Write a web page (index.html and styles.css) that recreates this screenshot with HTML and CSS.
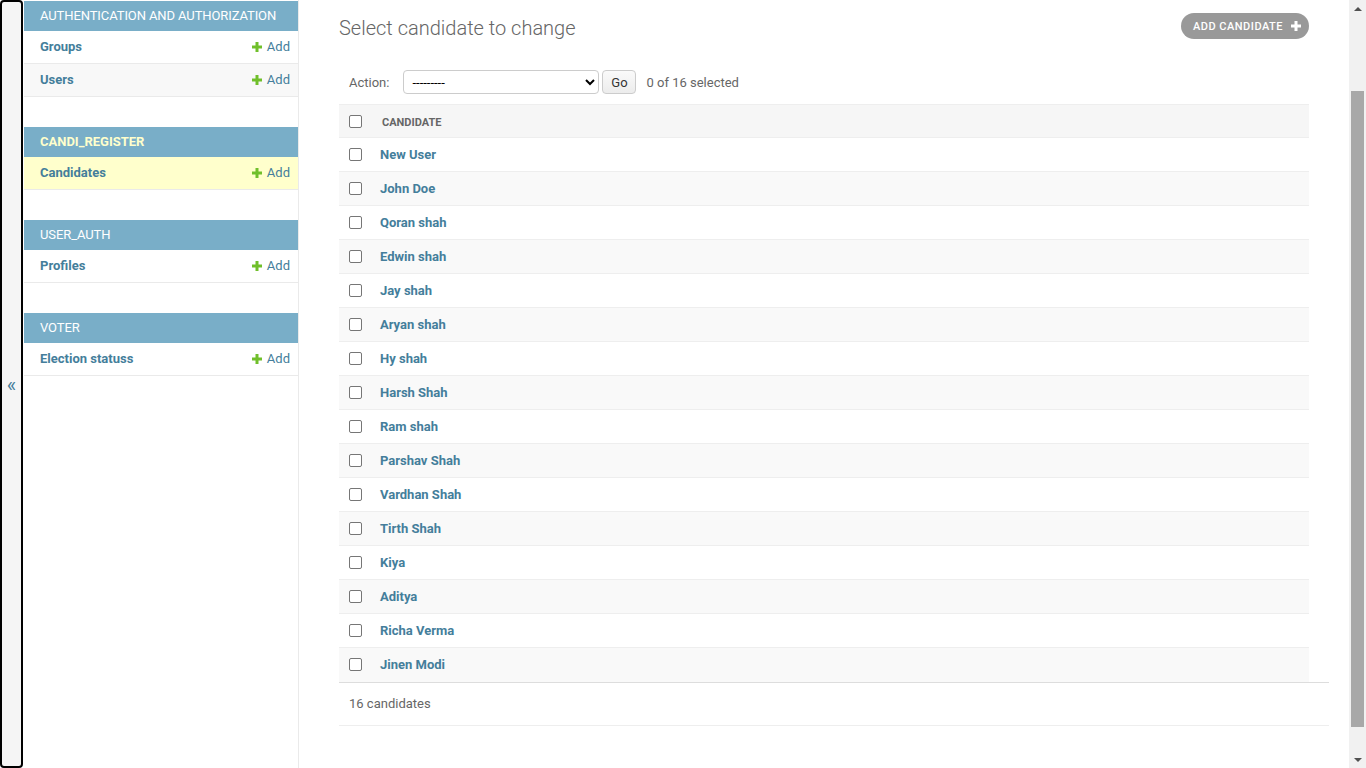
FILE: index.html
```html
<!DOCTYPE html>
<html lang="en">
<head>
<meta charset="utf-8">
<title>Select candidate to change</title>
<link rel="stylesheet" href="styles.css">
</head>
<body>
<div class="page">
  <button class="toggle" type="button">&laquo;</button>
  <nav class="sidebar">
    <div class="module">
      <div class="caption">Authentication and Authorization</div>
      <div class="row"><a class="model">Groups</a><a class="add"><svg viewBox="0 0 10 10"><path d="M3.5 0h3v3.5H10v3H6.5V10h-3V6.5H0v-3h3.5z"/></svg>Add</a></div>
      <div class="row alt"><a class="model">Users</a><a class="add"><svg viewBox="0 0 10 10"><path d="M3.5 0h3v3.5H10v3H6.5V10h-3V6.5H0v-3h3.5z"/></svg>Add</a></div>
    </div>
    <div class="module">
      <div class="caption current">Candi_Register</div>
      <div class="row current"><a class="model">Candidates</a><a class="add"><svg viewBox="0 0 10 10"><path d="M3.5 0h3v3.5H10v3H6.5V10h-3V6.5H0v-3h3.5z"/></svg>Add</a></div>
    </div>
    <div class="module">
      <div class="caption">User_Auth</div>
      <div class="row"><a class="model">Profiles</a><a class="add"><svg viewBox="0 0 10 10"><path d="M3.5 0h3v3.5H10v3H6.5V10h-3V6.5H0v-3h3.5z"/></svg>Add</a></div>
    </div>
    <div class="module">
      <div class="caption">Voter</div>
      <div class="row"><a class="model">Election statuss</a><a class="add"><svg viewBox="0 0 10 10"><path d="M3.5 0h3v3.5H10v3H6.5V10h-3V6.5H0v-3h3.5z"/></svg>Add</a></div>
    </div>
  </nav>
  <main class="main">
    <div class="head">
      <h1>Select candidate to change</h1>
      <a class="addbtn">Add candidate<svg viewBox="0 0 10 10"><path d="M3.5 0h3v3.5H10v3H6.5V10h-3V6.5H0v-3h3.5z"/></svg></a>
    </div>
    <div class="actions">
      <label class="action-label">Action:</label>
      <select class="action-select"><option>---------</option></select>
      <button class="go" type="button">Go</button>
      <span class="counter">0 of 16 selected</span>
    </div>
    <table class="results">
      <thead>
        <tr><th class="cb"><input type="checkbox"></th><th class="col"><span class="coltext">Candidate</span></th></tr>
      </thead>
      <tbody>
        <tr><td class="cb"><input type="checkbox"></td><th class="name"><a>New User</a></th></tr>
        <tr><td class="cb"><input type="checkbox"></td><th class="name"><a>John Doe</a></th></tr>
        <tr><td class="cb"><input type="checkbox"></td><th class="name"><a>Qoran shah</a></th></tr>
        <tr><td class="cb"><input type="checkbox"></td><th class="name"><a>Edwin shah</a></th></tr>
        <tr><td class="cb"><input type="checkbox"></td><th class="name"><a>Jay shah</a></th></tr>
        <tr><td class="cb"><input type="checkbox"></td><th class="name"><a>Aryan shah</a></th></tr>
        <tr><td class="cb"><input type="checkbox"></td><th class="name"><a>Hy shah</a></th></tr>
        <tr><td class="cb"><input type="checkbox"></td><th class="name"><a>Harsh Shah</a></th></tr>
        <tr><td class="cb"><input type="checkbox"></td><th class="name"><a>Ram shah</a></th></tr>
        <tr><td class="cb"><input type="checkbox"></td><th class="name"><a>Parshav Shah</a></th></tr>
        <tr><td class="cb"><input type="checkbox"></td><th class="name"><a>Vardhan Shah</a></th></tr>
        <tr><td class="cb"><input type="checkbox"></td><th class="name"><a>Tirth Shah</a></th></tr>
        <tr><td class="cb"><input type="checkbox"></td><th class="name"><a>Kiya</a></th></tr>
        <tr><td class="cb"><input type="checkbox"></td><th class="name"><a>Aditya</a></th></tr>
        <tr><td class="cb"><input type="checkbox"></td><th class="name"><a>Richa Verma</a></th></tr>
        <tr><td class="cb"><input type="checkbox"></td><th class="name"><a>Jinen Modi</a></th></tr>
      </tbody>
    </table>
    <p class="paginator">16 candidates</p>
  </main>
  <div class="scrollbar">
    <div class="sb-btn"><span class="tri up"></span></div>
    <div class="sb-track"><div class="sb-thumb"></div></div>
    <div class="sb-btn"><span class="tri down"></span></div>
  </div>
</div>
</body>
</html>
```

FILE: styles.css
```css
* { box-sizing: border-box; }
html, body { margin: 0; padding: 0; height: 100%; }
body {
  font-family: Roboto, "Liberation Sans", Arial, sans-serif;
  font-size: 13px;
  color: #333;
  background: #fff;
  overflow: hidden;
}
a { color: #447e9b; text-decoration: none; cursor: pointer; }

.page { display: flex; height: 768px; }

/* toggle */
.toggle {
  flex: 0 0 23px;
  width: 23px;
  height: 768px;
  margin: 0;
  padding: 0;
  border: 2px solid #000;
  border-radius: 4px;
  background: #f5f5f5;
  color: #447e9b;
  font-family: Roboto, "Liberation Sans", sans-serif;
  font-size: 20px;
  line-height: 1;
  display: flex;
  align-items: center;
  justify-content: center;
  padding-top: 2px;
}

/* sidebar */
.sidebar {
  flex: 0 0 275px;
  width: 275px;
  margin-left: 1px;
  padding-top: 1px;
  border-right: 1px solid #eaeaea;
  background: #fff;
}
.module { margin-bottom: 30px; }
.caption {
  height: 30px;
  line-height: 30px;
  padding-left: 16px;
  background: #79aec8;
  color: #fff;
  font-size: 13px;
  text-transform: uppercase;
  letter-spacing: -0.1px;
}
.caption.current { color: #ffc; font-weight: 700; letter-spacing: 0; }
.row {
  height: 33px;
  display: flex;
  align-items: center;
  justify-content: space-between;
  padding: 0 8px 1px 16px;
  border-bottom: 1px solid #eaeaea;
  background: #fff;
}
.row.alt { background: #f8f8f8; }
.row.current { background: #ffc; }
.model { font-weight: 700; font-size: 13px; }
.add { display: flex; align-items: center; font-size: 13px; }
.add svg { width: 10px; height: 10px; fill: #70bf2b; margin-right: 5px; }

/* main */
.main {
  flex: 1 1 auto;
  min-width: 0;
  padding: 13px 20px 0 40px;
}
.head {
  display: flex;
  justify-content: space-between;
  align-items: flex-start;
  margin-right: 20px;
}
.head h1 {
  margin: 3px 0 0 0;
  font-size: 20px;
  line-height: 24px;
  font-weight: 300;
  color: #666;
}
.addbtn {
  display: flex;
  align-items: center;
  height: 26px;
  padding: 0 8px 0 12px;
  border-radius: 15px;
  background: #999;
  color: #fff;
  font-size: 11px;
  font-weight: 500;
  text-transform: uppercase;
  letter-spacing: 0.5px;
}
.addbtn svg { width: 10px; height: 10px; fill: #fff; margin-left: 8px; }

.actions {
  display: flex;
  align-items: center;
  height: 44px;
  margin-top: 20px;
  padding: 0 10px;
  margin-right: 20px;
}
.action-label { color: #666; font-size: 13px; margin-right: 14px; }
.action-select {
  width: 196px;
  height: 24px;
  border: 1px solid #ccc;
  border-radius: 4px;
  background: #fff;
  font-family: Roboto, "Liberation Sans", sans-serif;
  font-size: 13px;
  color: #000;
  padding: 0 4px;
}
.go {
  height: 24px;
  width: 34px;
  margin-left: 3px;
  padding: 0;
  border: 1px solid #ccc;
  border-radius: 4px;
  background: linear-gradient(#fafafa, #ececec);
  color: #333;
  font-family: Roboto, "Liberation Sans", sans-serif;
  font-size: 13px;
}
.counter { color: #666; font-size: 13px; margin-left: 10px; }

.results {
  width: calc(100% - 20px);
  border-collapse: collapse;
  margin: 0;
}
.results thead th {
  height: 33px;
  background: #f6f6f6;
  border-top: 1px solid #eee;
  border-bottom: 1px solid #eee;
  text-align: left;
  padding: 0;
}
.results thead th.cb { padding-left: 10px; }
.coltext {
  padding-left: 12px;
  font-size: 11px;
  font-weight: 700;
  color: #666;
  text-transform: uppercase;
}
.results tbody tr { height: 34px; border-bottom: 1px solid #eee; }
.results tbody tr:nth-child(even) { background: #f9f9f9; }
.results tbody tr:last-child { border-bottom: 0; }
.cb { width: 31px; padding: 0 0 0 10px; text-align: left; vertical-align: middle; }
.name { text-align: left; padding: 0 0 0 10px; font-weight: 700; font-size: 13px; }

input[type="checkbox"] {
  -webkit-appearance: none;
  appearance: none;
  width: 13px;
  height: 13px;
  margin: 0;
  display: block;
  border: 1px solid #767676;
  border-radius: 2px;
  background: #fff;
}

.paginator {
  margin: 0;
  padding: 0 10px;
  height: 44px;
  line-height: 42px;
  border-top: 1px solid #ddd;
  border-bottom: 1px solid #eee;
  color: #666;
  font-size: 13px;
}

/* scrollbar */
.scrollbar {
  flex: 0 0 17px;
  width: 17px;
  background: #f1f1f1;
  display: flex;
  flex-direction: column;
}
.sb-btn {
  height: 17px;
  flex: 0 0 17px;
  display: flex;
  align-items: center;
  justify-content: center;
}
.sb-track { flex: 1 1 auto; padding: 74px 2px 0 2px; }
.sb-thumb { height: 636px; background: #a8a8a8; }
.tri { width: 0; height: 0; border-left: 4px solid transparent; border-right: 4px solid transparent; }
.tri.up { border-bottom: 4px solid #505050; }
.tri.down { border-top: 4px solid #505050; }
```
